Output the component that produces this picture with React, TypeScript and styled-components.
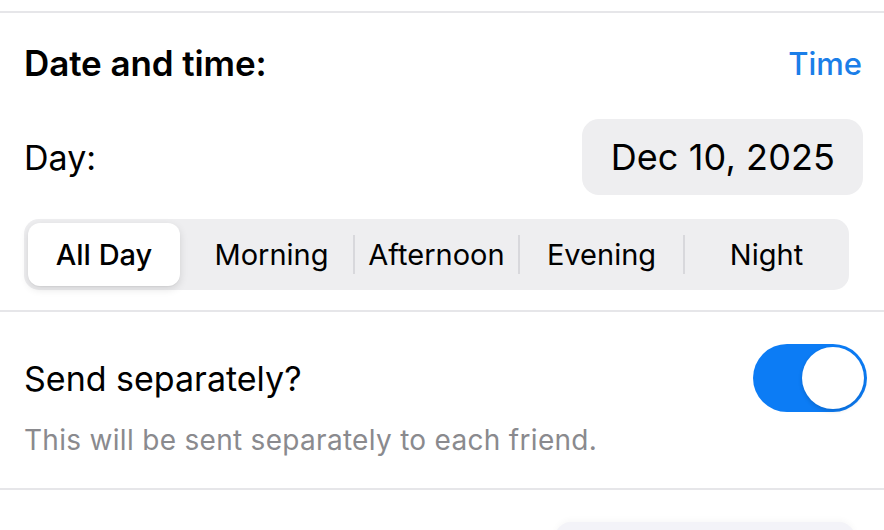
import React from "react";
import styled, { createGlobalStyle } from "styled-components";

const Global = createGlobalStyle`
  html, body { margin: 0; padding: 0; background: #ffffff; overflow: hidden; }
  body { font-family: Inter, "Noto Sans", sans-serif; color: #000; -webkit-font-smoothing: antialiased; }
`;

const Page = styled.div`
  width: 884px;
  height: 530px;
  display: flex;
  flex-direction: column;
  padding-top: 11px;
  box-sizing: border-box;
  overflow: hidden;
  & > * { flex-shrink: 0; }
`;

const Divider = styled.div`
  height: 2px;
  background: #e6e6e9;
`;

const Section = styled.div<{ $pt: number; $pb: number }>`
  display: flex;
  flex-direction: column;
  padding: ${(p) => p.$pt}px 17px ${(p) => p.$pb}px 24px;
`;

const HeaderRow = styled.div`
  display: flex;
  justify-content: space-between;
  align-items: center;
  height: 44px;
`;

const Title = styled.div`
  font-size: 35px;
  font-weight: 600;
  letter-spacing: -0.1px;
`;

const LinkText = styled.div`
  font-size: 31px;
  font-weight: 500;
  color: #1b7ee8;
  margin-right: 5px;
`;

const DayRow = styled.div`
  display: flex;
  justify-content: space-between;
  align-items: center;
  margin-top: 34px;
`;

const Label = styled.div`
  font-size: 34px;
  font-weight: 400;
  letter-spacing: 0px;
`;

const DatePill = styled.div`
  height: 76px;
  width: 281px;
  margin-right: 4px;
  box-sizing: border-box;
  display: flex;
  align-items: center;
  justify-content: flex-end;
  padding-right: 28px;
  border-radius: 17px;
  background: #eeeef0;
  font-size: 36px;
  letter-spacing: 0.1px;
`;

const Segmented = styled.div`
  margin-top: 24px;
  width: 825px;
  height: 71px;
  border-radius: 15px;
  background: #eeeef0;
  display: grid;
  grid-template-columns: repeat(5, 1fr);
  align-items: stretch;
  padding: 4px 0;
  box-sizing: border-box;
`;

const Segment = styled.div<{ $active?: boolean; $sep?: boolean }>`
  position: relative;
  display: flex;
  align-items: center;
  justify-content: center;
  font-size: 29px;
  letter-spacing: 0px;
  font-weight: ${(p) => (p.$active ? 500 : 400)};
  border-radius: 12px;
  margin: ${(p) => (p.$active ? "0 9px 0 4px" : "0")};
  background: ${(p) => (p.$active ? "#ffffff" : "transparent")};
  box-shadow: ${(p) =>
    p.$active ? "0 3px 8px rgba(0,0,0,0.12), 0 1px 1px rgba(0,0,0,0.04)" : "none"};
  &::before {
    content: "";
    display: ${(p) => (p.$sep ? "block" : "none")};
    position: absolute;
    left: -1px;
    top: 12px;
    bottom: 12px;
    width: 2px;
    background: #d8d8dc;
  }
`;

const ToggleRow = styled.div`
  display: flex;
  justify-content: space-between;
  align-items: center;
`;

const Toggle = styled.div`
  width: 114px;
  height: 68px;
  border-radius: 34px;
  background: #0c7cf5;
  display: flex;
  align-items: center;
  justify-content: flex-end;
  padding: 3px;
  box-sizing: border-box;
`;

const Knob = styled.div`
  width: 62px;
  height: 62px;
  border-radius: 50%;
  background: #fff;
  box-shadow: 0 2px 4px rgba(0, 0, 0, 0.15);
`;

const Hint = styled.div`
  margin-top: 11px;
  font-size: 28px;
  line-height: 34px;
  color: #8a8a8e;
  letter-spacing: 0.3px;
`;

const Footer = styled.div`
  display: flex;
  justify-content: flex-end;
  padding: 32px 29px 0 0;
`;

const GhostButton = styled.div`
  width: 300px;
  height: 60px;
  border-radius: 16px;
  background: #f3f3f8;
  box-shadow: 0 -2px 6px rgba(0, 0, 0, 0.03);
`;

const segments = ["All Day", "Morning", "Afternoon", "Evening", "Night"];

export default function App() {
  const active = 0;
  return (
    <Page>
      <Global />
      <Divider />
      <Section $pt={28} $pb={20}>
        <HeaderRow>
          <Title>Date and time:</Title>
          <LinkText>Time</LinkText>
        </HeaderRow>
        <DayRow>
          <Label>Day:</Label>
          <DatePill>Dec 10, 2025</DatePill>
        </DayRow>
        <Segmented>
          {segments.map((s, i) => (
            <Segment
              key={s}
              $active={i === active}
              $sep={i > 0 && i !== active && i - 1 !== active}
            >
              {s}
            </Segment>
          ))}
        </Segmented>
      </Section>
      <Divider />
      <Section $pt={32} $pb={31}>
        <ToggleRow>
          <Label>Send separately?</Label>
          <Toggle>
            <Knob />
          </Toggle>
        </ToggleRow>
        <Hint>This will be sent separately to each friend.</Hint>
      </Section>
      <Divider />
      <Footer>
        <GhostButton />
      </Footer>
    </Page>
  );
}
